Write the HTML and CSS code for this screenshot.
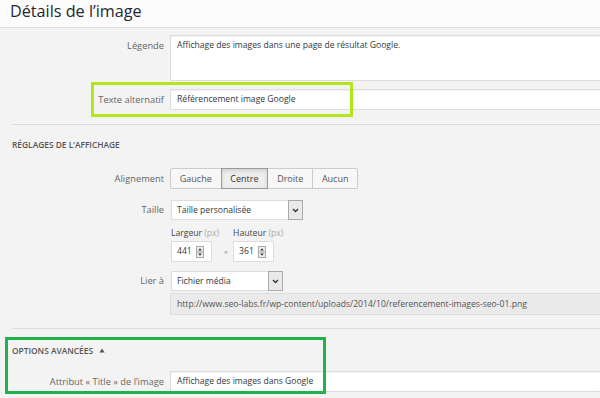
FILE: index.html
```html
<!DOCTYPE HTML>
<html lang="fr">
  <head>
    <title>Détails de l’image</title>
    <meta charset="utf-8">
    <link rel="stylesheet" href="styles.css">
  </head>
  <body>

  <div class="modal-head">
    <h1>Détails de l’image</h1>
  </div>

  <div class="settings">

    <div class="setting caption">
      <span class="name">Légende</span>
      <div class="field area">Affichage des images dans une page de résultat Google.</div>
    </div>

    <div class="setting alt">
      <span class="name">Texte alternatif</span>
      <div class="field">Référencement image Google</div>
      <div class="mark lime"></div>
    </div>

    <div class="sep"></div>

    <h2 class="section">Réglages de l’affichage</h2>

    <div class="setting align">
      <span class="name">Alignement</span>
      <div class="btn-group">
        <span class="btn">Gauche</span>
        <span class="btn active">Centre</span>
        <span class="btn">Droite</span>
        <span class="btn">Aucun</span>
      </div>
    </div>

    <div class="setting size">
      <span class="name">Taille</span>
      <div class="select wide">
        <span class="val">Taille personalisée</span>
        <span class="arrow"><svg width="7" height="5" viewBox="0 0 7 5"><path d="M1 1l2.5 2.5L6 1" fill="none" stroke="#333" stroke-width="1.3"/></svg></span>
      </div>
    </div>

    <div class="setting dims">
      <span class="name"></span>
      <div class="dim-row">
        <div class="dim">
          <span class="dim-label">Largeur <em>(px)</em></span>
          <div class="num">441<span class="spin"><svg width="8" height="12" viewBox="0 0 8 12"><rect x="0.5" y="0.5" width="7" height="11" fill="#ededed" stroke="#aaa"/><path d="M1 6h6" stroke="#aaa"/><path d="M4 2.2l-1.8 2.3h3.6z M4 9.8l-1.8-2.3h3.6z" fill="#333"/></svg></span></div>
        </div>
        <span class="times">×</span>
        <div class="dim">
          <span class="dim-label">Hauteur <em>(px)</em></span>
          <div class="num">361<span class="spin"><svg width="8" height="12" viewBox="0 0 8 12"><rect x="0.5" y="0.5" width="7" height="11" fill="#ededed" stroke="#aaa"/><path d="M1 6h6" stroke="#aaa"/><path d="M4 2.2l-1.8 2.3h3.6z M4 9.8l-1.8-2.3h3.6z" fill="#333"/></svg></span></div>
        </div>
      </div>
    </div>

    <div class="setting link">
      <span class="name">Lier à</span>
      <div class="select">
        <span class="val">Fichier média</span>
        <span class="arrow"><svg width="7" height="5" viewBox="0 0 7 5"><path d="M1 1l2.5 2.5L6 1" fill="none" stroke="#333" stroke-width="1.3"/></svg></span>
      </div>
    </div>

    <div class="setting url">
      <span class="name"></span>
      <div class="field readonly">http://www.seo-labs.fr/wp-content/uploads/2014/10/referencement-images-seo-01.png</div>
    </div>

    <div class="sep"></div>

    <div class="advanced">
      <h2 class="section">Options avancées <svg width="6" height="5" viewBox="0 0 6 5"><path d="M3 0.5L5.6 4.5H0.4z" fill="#555"/></svg></h2>

      <div class="setting title-attr">
        <span class="name">Attribut « Title » de l’image</span>
        <div class="field">Affichage des images dans Google</div>
      </div>

      <div class="mark green"></div>
    </div>

  </div>

  </body>
</html>
```

FILE: styles.css
```css
html {
  height: 100%;
}
body {
  margin: 0;
  padding: 0;
  width: 600px;
  height: 398px;
  overflow: hidden;
  background: #f3f3f3;
  color: #32373c;
  font-family: "Open Sans", sans-serif;
  font-size: 9.3px;
  line-height: 13px;
}

.modal-head {
  height: 27px;
  background: #fcfcfc;
  border-bottom: 1px solid #dddddd;
}
.modal-head h1 {
  margin: 0;
  padding-left: 10px;
  font-size: 16.2px;
  font-weight: 400;
  line-height: 22px;
  color: #23282d;
}

.settings {
  padding-top: 7px;
}

.setting {
  display: grid;
  grid-template-columns: 164px 1fr;
  column-gap: 6px;
  position: relative;
}
.setting .name {
  text-align: right;
  color: #666666;
  line-height: 21px;
}

.field {
  background: #ffffff;
  border: 1px solid #dddddd;
  border-right: 0;
  box-shadow: inset 0 1px 1px rgba(0,0,0,0.05);
  height: 21px;
  box-sizing: border-box;
  padding: 0 6px;
  font-size: 8.6px;
  line-height: 19px;
  white-space: nowrap;
  overflow: hidden;
}

.caption .name {
  line-height: 13px;
  padding-top: 4px;
}
.field.area {
  height: 46px;
  padding-top: 3px;
  line-height: 13px;
}

.alt {
  margin-top: 8px;
}

.mark {
  position: absolute;
  box-sizing: border-box;
  pointer-events: none;
}
.mark.lime {
  top: -7px;
  left: 91px;
  width: 262px;
  height: 35px;
  border: 3px solid #b5e61d;
}

.sep {
  height: 1px;
  margin-left: 12px;
  background: #dddddd;
}
.alt + .sep {
  margin-top: 14px;
}

.section {
  margin: 14px 0 0 0;
  padding-left: 12px;
  font-size: 8.4px;
  font-weight: 600;
  line-height: 12px;
  text-transform: uppercase;
  color: #555555;
}
.section svg {
  margin-left: 4px;
  vertical-align: 1px;
}

.align {
  margin-top: 17px;
}
.btn-group {
  display: flex;
}
.btn {
  height: 21px;
  box-sizing: border-box;
  padding: 0 8.8px;
  font-size: 9px;
  line-height: 19px;
  background: #f7f7f7;
  border: 1px solid #cccccc;
  border-left-width: 0;
  color: #555555;
}
.btn:first-child {
  border-left-width: 1px;
  border-radius: 2px 0 0 2px;
}
.btn:last-child {
  border-radius: 0 2px 2px 0;
}
.btn.active {
  background: #eeeeee;
  border-color: #999999;
  border-left-width: 1px;
  margin-left: -1px;
  box-shadow: inset 0 2px 4px rgba(0,0,0,0.12);
  color: #333333;
}

.size {
  margin-top: 11px;
}
.size .name,
.link .name {
  line-height: 19px;
}
.select {
  display: flex;
  width: 112px;
  height: 20px;
  margin-left: 1px;
  box-sizing: border-box;
  background: #ffffff;
  border: 1px solid #dddddd;
  font-size: 8.6px;
}
.select.wide {
  width: 132px;
}
.select .val {
  flex: 1;
  padding-left: 5px;
  line-height: 18px;
  white-space: nowrap;
}
.select .arrow {
  width: 13px;
  margin: -1px -1px -1px 0;
  display: flex;
  align-items: center;
  justify-content: center;
  background: #e9e9e9;
  border: 1px solid #aaaaaa;
}

.dims {
  margin-top: 7px;
}
.dim-row {
  display: flex;
  align-items: flex-end;
  margin-left: 1px;
}
.dim {
  display: flex;
  flex-direction: column;
}
.dim-label {
  font-size: 8.6px;
  line-height: 13px;
  margin-bottom: 1px;
  color: #444444;
}
.dim-label em {
  font-style: normal;
  color: #aaaaaa;
}
.num {
  width: 41px;
  height: 21px;
  box-sizing: border-box;
  background: #ffffff;
  border: 1px solid #dddddd;
  padding-left: 5px;
  font-size: 8.6px;
  line-height: 19px;
  display: flex;
  align-items: center;
  gap: 4px;
}
.num .spin {
  display: flex;
}
.times {
  width: 14px;
  text-align: center;
  line-height: 21px;
  font-size: 8px;
  color: #999999;
}

.link {
  margin-top: 9px;
}
.url {
  margin-top: 2px;
}
.field.readonly {
  height: 22px;
  line-height: 20px;
  background: #eaeaea;
  box-shadow: none;
  color: #555555;
}

.url + .sep {
  margin-top: 13px;
}

.advanced {
  position: relative;
  padding-top: 2px;
}
.title-attr {
  margin-top: 14px;
}
.mark.green {
  top: 8px;
  left: 5px;
  width: 321px;
  height: 57px;
  border: 3px solid #22b14c;
}
```
